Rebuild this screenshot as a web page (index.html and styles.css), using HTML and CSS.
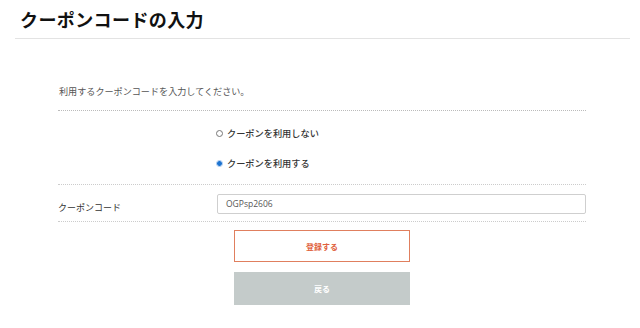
FILE: index.html
```html
<!DOCTYPE html>
<html lang="ja">
<head>
<meta charset="utf-8">
<link rel="stylesheet" href="styles.css">
</head>
<body>
<header class="header">
  <h1 class="title">クーポンコードの入力</h1>
</header>
<main class="main">
  <p class="intro">利用するクーポンコードを入力してください。</p>
  <div class="choices">
    <label class="choice"><span class="radio"></span>クーポンを利用しない</label>
    <label class="choice"><span class="radio checked"></span>クーポンを利用する</label>
  </div>
  <div class="code-row">
    <span class="code-label">クーポンコード</span>
    <div class="code-input">OGPsp2606</div>
  </div>
  <div class="actions">
    <button class="btn btn-primary">登録する</button>
    <button class="btn btn-back">戻る</button>
  </div>
</main>
</body>
</html>
```
FILE: styles.css
```css
* { box-sizing: border-box; }
body {
  margin: 0;
  background: #fff;
  font-family: "Noto Sans CJK JP", "Noto Sans", sans-serif;
  color: #333;
}
.header {
  margin: 0 10px 0 15px;
  height: 39px;
  border-bottom: 1px solid #e3e3e3;
  padding: 6px 0 0 5px;
}
.title {
  margin: 0;
  font-size: 18px;
  line-height: 26px;
  font-weight: 700;
  color: #111;
  letter-spacing: 0.4px;
}
.main {
  padding: 0 54px 0 58px;
}
.intro {
  margin: 0;
  padding: 45px 0 12px 1px;
  font-size: 9.1px;
  line-height: 14px;
  color: #555;
  border-bottom: 1px dotted #bbb;
}
.choices {
  padding: 12px 0 11px 158px;
  display: flex;
  flex-direction: column;
  gap: 10px;
  border-bottom: 1px dotted #ccc;
}
.choice {
  display: flex;
  align-items: center;
  height: 20px;
  font-size: 9.2px;
  font-weight: 500;
  color: #333;
}
.radio {
  width: 7px;
  height: 7px;
  border-radius: 50%;
  border: 1px solid #777;
  margin-right: 4px;
  flex: none;
}
.radio.checked {
  border: 1px solid #9fc3ee;
  background: radial-gradient(circle, #1e74d0 0 2.2px, #fff 2.6px);
}
.code-row {
  display: flex;
  align-items: center;
  padding: 9px 0 7px 0;
  border-bottom: 1px dotted #ccc;
}
.code-label {
  width: 159px;
  flex: none;
  font-size: 9px;
  color: #333;
  padding-top: 6px;
}
.code-input {
  flex: 1;
  height: 20px;
  border: 1px solid #cfcfcf;
  border-radius: 2px;
  padding: 0 8px;
  font-family: "Open Sans", "Noto Sans", sans-serif;
  font-size: 8.5px;
  line-height: 18px;
  color: #555;
}
.actions {
  display: flex;
  flex-direction: column;
  align-items: center;
  gap: 10px;
  padding-top: 8px;
}
.btn {
  width: 176px;
  font-family: inherit;
  font-size: 8px;
  font-weight: 700;
  border-radius: 0;
  cursor: pointer;
}
.btn-primary {
  height: 32px;
  background: #fff;
  border: 1px solid #e07f5e;
  color: #e0603c;
}
.btn-back {
  height: 33px;
  background: #c4cbca;
  border: none;
  color: #fff;
}
```
